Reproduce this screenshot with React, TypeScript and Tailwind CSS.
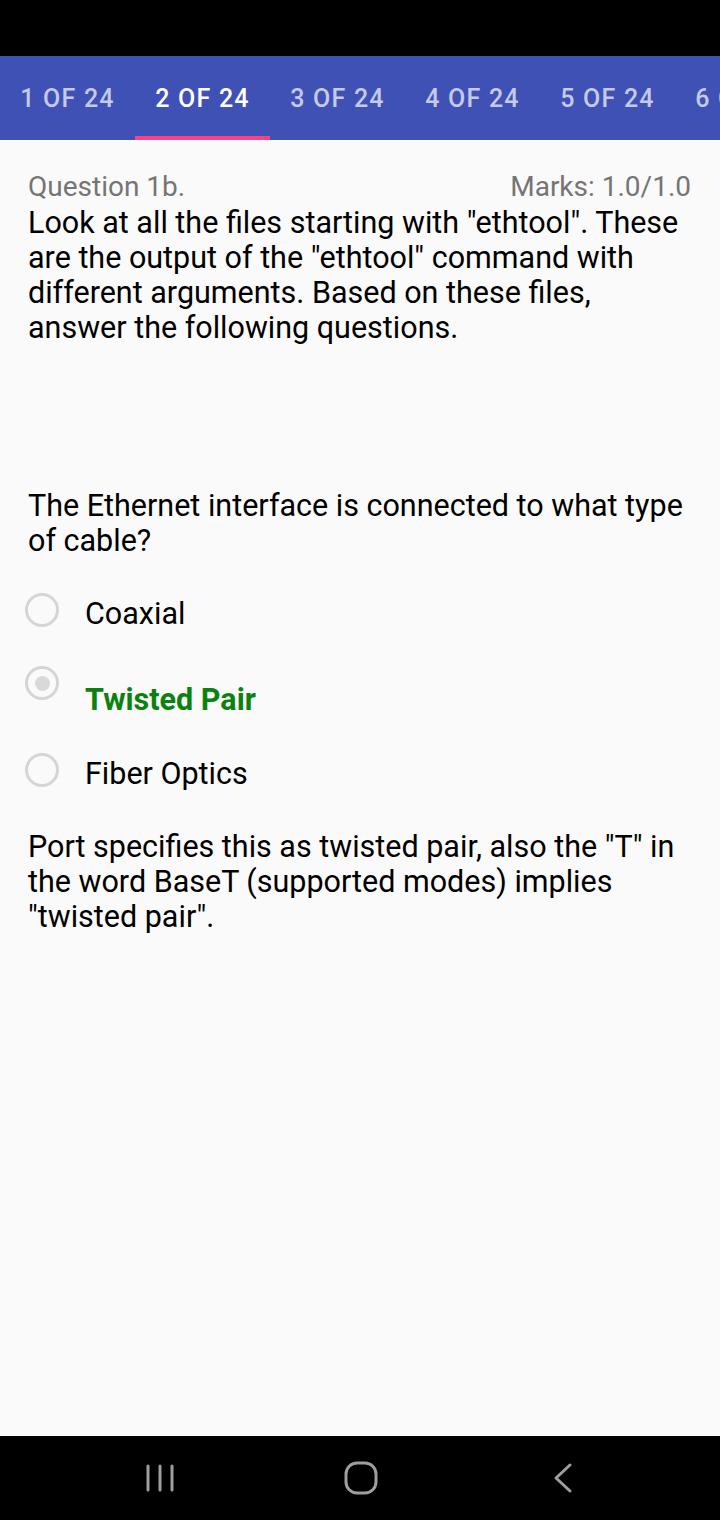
const tabs = ["1 OF 24", "2 OF 24", "3 OF 24", "4 OF 24", "5 OF 24", "6 OF 24"];

function Radio({ checked }: { checked?: boolean }) {
  return (
    <div className="w-[34px] h-[34px] shrink-0 rounded-full border-[3px] border-[#d5d5d5] flex items-center justify-center">
      {checked && <div className="w-[15px] h-[15px] rounded-full bg-[#d9d9d9]" />}
    </div>
  );
}

export default function App() {
  return (
    <div className="w-[720px] h-[1520px] flex flex-col bg-[#fafafa] overflow-hidden font-['Roboto',sans-serif]">
      {/* status bar */}
      <div className="h-[56px] bg-black shrink-0" />

      {/* tabs */}
      <div className="h-[84px] bg-[#3f51b5] flex shrink-0 overflow-hidden">
        {tabs.map((t, i) => (
          <div key={t} className="relative w-[135px] shrink-0 flex items-center justify-center pt-[2px]">
            <span
              className={`text-[25px] font-medium tracking-[1.2px] whitespace-nowrap ${
                i === 1 ? "text-white" : "text-[#c5cae9]"
              }`}
            >
              {t}
            </span>
            {i === 1 && <div className="absolute left-0 right-0 bottom-0 h-[4px] bg-[#ff4081]" />}
          </div>
        ))}
      </div>

      {/* content */}
      <div className="flex-1 px-[28px] pt-[32px] text-black">
        <div className="flex justify-between text-[28px] leading-[30px] text-[#757575]">
          <span>Question 1b.</span>
          <span className="pr-[1px]">Marks: 1.0/1.0</span>
        </div>
        <p className="mt-[3px] text-[30.5px] leading-[35px]">
          Look at all the files starting with "ethtool". These are the output of the "ethtool" command with
          different arguments. Based on these files, answer the following questions.
        </p>

        <p className="mt-[143px] text-[30.5px] leading-[35px]">
          The Ethernet interface is connected to what type of cable?
        </p>

        <div className="mt-[35px] -ml-[3px] flex flex-col">
          <div className="h-[73px] flex gap-[26px]">
            <Radio />
            <span className="mt-[3px] text-[30.5px] leading-[35px]">Coaxial</span>
          </div>
          <div className="h-[87px] flex gap-[26px]">
            <Radio checked />
            <span className="mt-[16px] text-[30.5px] leading-[35px] font-bold text-[#0b820e]">Twisted Pair</span>
          </div>
          <div className="flex gap-[26px]">
            <Radio />
            <span className="mt-[3px] text-[30.5px] leading-[35px]">Fiber Optics</span>
          </div>
        </div>

        <p className="mt-[38px] text-[30.5px] leading-[35px]">
          Port specifies this as twisted pair, also the "T" in the word BaseT (supported modes) implies "twisted
          pair".
        </p>
      </div>

      {/* nav bar */}
      <div className="h-[84px] bg-black shrink-0 flex items-center pl-[145px]">
        <svg width="30" height="30" viewBox="0 0 30 30">
          <g stroke="#9e9e9e" strokeWidth="3" strokeLinecap="round">
            <line x1="3" y1="3" x2="3" y2="27" />
            <line x1="15" y1="3" x2="15" y2="27" />
            <line x1="27" y1="3" x2="27" y2="27" />
          </g>
        </svg>
        <svg width="34" height="34" viewBox="0 0 34 34" className="ml-[169px]">
          <rect x="2" y="2" width="30" height="30" rx="11" fill="none" stroke="#9e9e9e" strokeWidth="3" />
        </svg>
        <svg width="22" height="32" viewBox="0 0 22 32" className="ml-[174px]">
          <polyline points="18,3 4,16 18,29" fill="none" stroke="#9e9e9e" strokeWidth="3" strokeLinecap="round" strokeLinejoin="round" />
        </svg>
      </div>
    </div>
  );
}
